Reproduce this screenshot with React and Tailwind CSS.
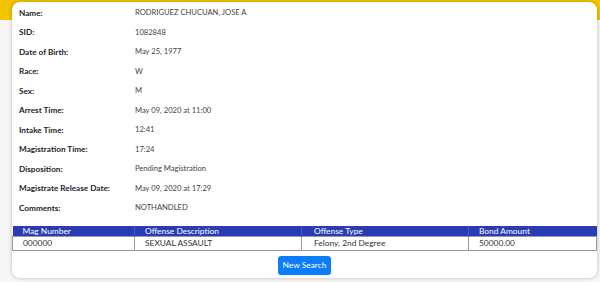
export default function App() {
  const rows = [
    ["Name:", "RODRIGUEZ CHUCUAN, JOSE A"],
    ["SID:", "1082848"],
    ["Date of Birth:", "May 25, 1977"],
    ["Race:", "W"],
    ["Sex:", "M"],
    ["Arrest Time:", "May 09, 2020 at 11:00"],
    ["Intake Time:", "12:41"],
    ["Magistration Time:", "17:24"],
    ["Disposition:", "Pending Magistration"],
    ["Magistrate Release Date:", "May 09, 2020 at 17:29"],
    ["Comments:", "NOTHANDLED"],
  ];

  return (
    <div className="w-[600px] h-[282px] bg-[#f7f7f7] overflow-hidden font-['Lato',sans-serif]">
      {/* yellow header band */}
      <div className="h-[20px] bg-[#f5c400]" />

      {/* card */}
      <div className="-mt-[18px] ml-[12px] w-[585px] h-[276px] bg-white rounded-[8px] shadow-[0_0_4px_rgba(0,0,0,0.25)] flex flex-col">
        <div className="pt-[1px] pl-[7px]">
          {rows.map(([label, value]) => (
            <div key={label} className="flex items-center h-[19.5px] text-[#212529] whitespace-nowrap">
              <div className="w-[116px] shrink-0 font-bold text-[8.2px]">{label}</div>
              <div className="text-[#444] text-[7.6px]">{value}</div>
            </div>
          ))}
        </div>

        {/* offenses table */}
        <table className="mt-[8px] w-full border-collapse text-[8.4px] table-fixed">
          <thead>
            <tr className="bg-[#2a3cb4] text-white">
              <th className="w-[122px] h-[10px] leading-[10px] p-0 text-left font-normal pl-[10px] border-r border-[#4a5cc8]">Mag Number</th>
              <th className="w-[167px] h-[10px] leading-[10px] p-0 text-left font-normal pl-[10px] border-r border-[#4a5cc8]">Offense Description</th>
              <th className="w-[167px] h-[10px] leading-[10px] p-0 text-left font-normal pl-[12px] border-r border-[#4a5cc8]">Offense Type</th>
              <th className="h-[10px] leading-[10px] p-0 text-left font-normal pl-[10px]">Bond Amount</th>
            </tr>
          </thead>
          <tbody>
            <tr className="h-[14px] leading-[12px] text-[#333] border border-[#9a9a9a]">
              <td className="pl-[10px] border-r border-[#9a9a9a]">000000</td>
              <td className="pl-[10px] border-r border-[#9a9a9a]">SEXUAL ASSAULT</td>
              <td className="pl-[12px] border-r border-[#9a9a9a]">Felony, 2nd Degree</td>
              <td className="pl-[10px]">50000.00</td>
            </tr>
          </tbody>
        </table>

        <div className="flex justify-center mt-[5px]">
          <button className="h-[19px] w-[53px] bg-[#0b7dfa] text-white text-[8.4px] rounded-[3px]">
            New Search
          </button>
        </div>
      </div>
    </div>
  );
}
